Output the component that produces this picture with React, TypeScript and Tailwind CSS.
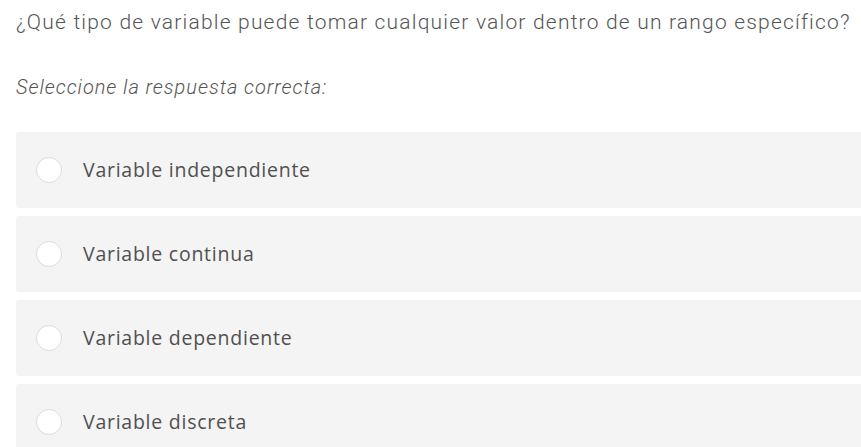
import { useState } from 'react'

const options = [
  'Variable independiente',
  'Variable continua',
  'Variable dependiente',
  'Variable discreta',
]

export default function App() {
  const [selected, setSelected] = useState<number | null>(null)

  return (
    <div className="min-h-screen bg-white overflow-hidden">
      <div className="pl-4 pt-[9px]">
        <p
          className="text-[21px] leading-[26px] font-light tracking-[1.2px] text-[#555] whitespace-nowrap"
          style={{ fontFamily: 'Roboto, sans-serif' }}
        >
          ¿Qué tipo de variable puede tomar cualquier valor dentro de un rango específico?
        </p>
        <p
          className="mt-[40px] text-[20px] leading-[24px] font-light italic tracking-[0.95px] text-[#555]"
          style={{ fontFamily: 'Roboto, sans-serif' }}
        >
          Seleccione la respuesta correcta:
        </p>

        <div className="mt-[33px] flex flex-col gap-[8px] w-[900px]">
          {options.map((opt, i) => (
            <button
              key={opt}
              type="button"
              onClick={() => setSelected(i)}
              className="flex items-center h-[76px] bg-[#f4f4f4] rounded-[3px] pl-[20px] text-left"
            >
              <span className="w-[26px] h-[26px] rounded-full bg-white border border-[#dcdcdc] flex items-center justify-center shrink-0">
                {selected === i && <span className="w-3 h-3 rounded-full bg-[#555]" />}
              </span>
              <span
                className="ml-[21px] text-[19.5px] tracking-[0.75px] text-[#505050]"
                style={{ fontFamily: '"Open Sans", sans-serif' }}
              >
                {opt}
              </span>
            </button>
          ))}
        </div>
      </div>
    </div>
  )
}
